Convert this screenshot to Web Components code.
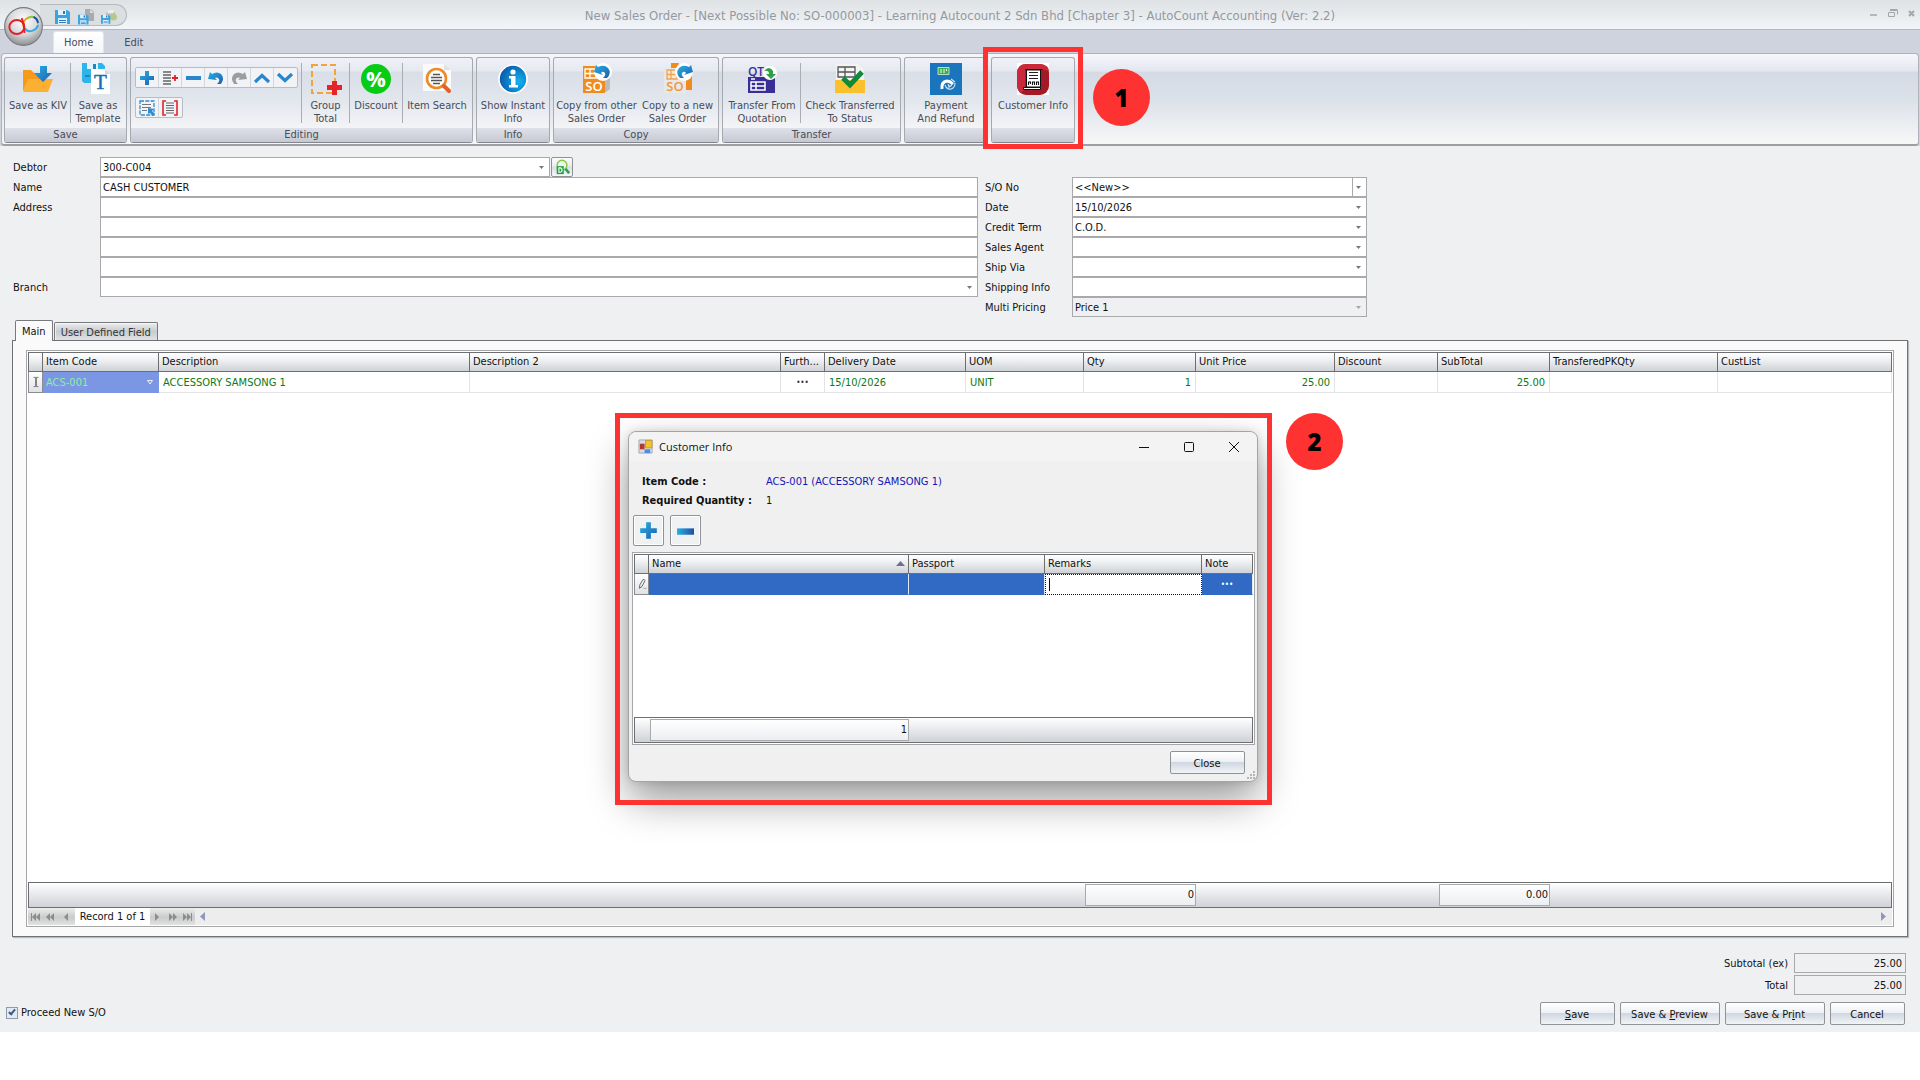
<!DOCTYPE html>
<html lang="en">
<head>
<meta charset="utf-8">
<title>New Sales Order - AutoCount Accounting</title>
<style>
  html, body { margin: 0; background: #fff; }
  body { font: 11px/13px "DejaVu Sans Condensed", "DejaVu Sans", sans-serif; color: #111; }
</style>
</head>
<body>
<sales-order-app></sales-order-app>

<script>
const BASE = `
  *, *::before, *::after { box-sizing: border-box; }
  :host { display: block; }
  button, input, select { font: inherit; color: inherit; margin: 0; border-radius: 0; outline: 0; }
  button { padding: 0; border: 0; background: none; cursor: default; }
  svg { display: block; }
`;

/* Icon artwork. Each entry: [viewBox, markup] */
const BLUE = '<defs><linearGradient id="b" x1="0" y1="0" x2="1" y2="1"><stop offset="0" stop-color="#27b0e6"/><stop offset="1" stop-color="#1f5fae"/></linearGradient></defs>';
const FLOPPY = '<path fill="#3ba3e0" d="M0 1h12l3 2v12H0z"/><path fill="#dff1fb" d="M3 1h8v5H3zM3 9h9v6H3z"/><path fill="#2b7cc4" d="M8 2h2v3H8zM4 11h7v1H4zM4 13h7v1H4z"/>';
const ICONS = {
  orb: ['0 0 38 38', `<defs><radialGradient id="g" cx=".5" cy=".35" r=".65"><stop offset="0" stop-color="#fff"/><stop offset=".55" stop-color="#d9dadc"/><stop offset="1" stop-color="#8e9093"/></radialGradient></defs>
    <circle cx="19" cy="19" r="18.4" fill="url(#g)" stroke="#77797c"/>
    <g fill="none" stroke-width="1.900" stroke-linecap="round">
    <path d="M19.500 20a7 7 0 0 1 4-9.500" stroke="#f6a21b"/><path d="M23.500 10.500q3-1.500 6-.500" stroke="#8cc63f"/><path d="M29.500 10q3 1.500 3.500 5" stroke="#1c4fa0"/><path d="M20.500 21q3 4 7.500 2 4-1.500 5-5" stroke="#35a8e0"/>
    <ellipse cx="12.500" cy="19.500" rx="7.300" ry="6.800" stroke="#e0202c"/><path d="M17.500 11.500q2 5 2.500 13" stroke="#e0202c"/></g>`],
  floppy: ['0 0 16 16', FLOPPY],
  floppyDoc: ['0 0 16 16', '<path fill="#a9abad" d="M7 0h6l3 3v9H7z"/><path fill="#d8dadb" d="M12 0v4h4z"/><g transform="translate(0 5) scale(.7)">' + FLOPPY + '</g>'],
  floppyPrint: ['0 0 18 16', '<path fill="#b9bbbd" d="M6 3h10v7H6z"/><path fill="#eceded" d="M8 0h6v4H8z"/><circle cx="14" cy="8" r="4" fill="#b5c98a"/><g transform="translate(0 5) scale(.7)">' + FLOPPY + '</g>'],
  kiv: ['0 0 32 32', BLUE + '<path fill="#f59a1b" d="M1 7h8l3 3h12v6H7L1 28z"/><path fill="#fbb034" d="M6 16h25l-5 13H1z"/><path fill="url(#b)" d="M18 3h7v7h5l-9 9-9-9h6z"/>'],
  template: ['0 0 32 32', '<path fill="#2fb4ea" d="M0 0h20l3 3v3H9v14H2l-2-2z"/><path fill="#dff3fc" d="M5 0h11v6H5z"/><path fill="#2583c4" d="M11 1h3v5h-3zM3 12h5v2H3z"/><path fill="#fff" d="M9 6h14l5 5v20H9z"/><path fill="#d5d7da" d="M23 6l5 5h-5z"/><text x="18.500" y="26" font-family="Liberation Serif" font-size="21" fill="#1c6fb5" stroke="#1c6fb5" stroke-width=".5" text-anchor="middle">T</text>'],
  plus: ['0 0 16 16', BLUE + '<path fill="url(#b)" d="M6 1h4v5h5v4h-5v5H6v-5H1V6h5z"/>'],
  listPlus: ['0 0 16 16', '<path stroke="#666" stroke-width="1.300" d="M1 2h8M1 5h8M1 8h8M1 11h8M1 14h8"/><path stroke="#e3242b" stroke-width="1.800" d="M10 8h6M13 5v6"/>'],
  minus: ['0 0 16 16', BLUE + '<rect x="1" y="6" width="15" height="4" fill="#2a86cc"/>'],
  undo: ['0 0 16 16', BLUE + '<path fill="url(#b)" d="M0 9 2 2l2 2q5-3 9 0 4 4 0 10h-4q4-4 1-6-2-1-3 0l2 2z"/>'],
  redo: ['0 0 16 16', '<path fill="#9b9da0" d="M16 9 14 2l-2 2Q7 1 3 4q-4 4 0 10h4Q3 10 6 8q2-1 3 0l-2 2z"/>'],
  up: ['0 0 16 16', '<path fill="none" stroke="#2a86cc" stroke-width="3.200" d="M1 12l7-6.500 7 6.500"/>'],
  down: ['0 0 16 16', '<path fill="none" stroke="#2a86cc" stroke-width="3.200" d="M1 4l7 6.500L15 4"/>'],
  selectAll: ['0 0 16 16', '<rect x="1" y="1" width="14" height="14" fill="none" stroke="#2f8bd0" stroke-width="1.300" stroke-dasharray="4 1.300"/><path stroke="#777" stroke-width="1.100" d="M3 4.500h9M3 7.500h9M3 10.500h5"/><path fill="#2f8bd0" d="M9 8l6 1-2 2 3 3-2 2-3-3-2 1z"/>'],
  brackets: ['0 0 16 16', '<path fill="none" stroke="#e3242b" stroke-width="1.600" d="M4 1H1v14h3M12 1h3v14h-3"/><path stroke="#666" stroke-width="1.100" d="M4 3h8M4 5.500h8M4 8h8M4 10.500h8M4 13h8"/>'],
  group: ['0 0 32 32', '<rect x="2" y="2" width="23" height="28" fill="none" stroke="#f2a33a" stroke-width="2" stroke-dasharray="6 3"/><path fill="#e3242b" d="M22 18h5v4h5v5h-5v5h-5v-5h-5v-5h5z"/>'],
  discount: ['0 0 32 32', '<circle cx="16" cy="16" r="15" fill="#06cc14"/><text x="16" y="24" font-family="Open Sans" font-weight="700" font-size="22" fill="#fff" text-anchor="middle">%</text>'],
  search: ['0 0 32 32', '<path fill="#fbfbfc" d="M2 1h21l7 6v21H2z"/><path fill="#dfe1e5" d="M23 1l7 6h-7z"/><circle cx="15.500" cy="15.500" r="9.500" fill="#fff" stroke="#ef8a2b" stroke-width="2.600"/><path stroke="#e2602a" stroke-width="4" stroke-linecap="round" d="M23 23l5 5"/><path stroke="#555" stroke-width="1.600" d="M12 11.500h7M10 14.500h11M10 17.500h11M12 20.500h7"/>'],
  info: ['0 0 32 32', '<defs><radialGradient id="i" cx=".7" cy=".6" r=".7"><stop offset="0" stop-color="#12b2f2"/><stop offset="1" stop-color="#0a5aa8"/></radialGradient></defs><circle cx="16" cy="16" r="14" fill="url(#i)" stroke="#fff" stroke-width="1.600"/><circle cx="16" cy="9" r="2.600" fill="#fff"/><path fill="#fff" d="M12 13h6.500v9H21v2.500h-9V22h2v-6.500h-2z"/>'],
  copyFrom: ['0 0 32 32', BLUE + '<path fill="#b9bbbe" d="M8 8h21v18l-4 3H8z"/><path fill="#f08c1e" d="M2 3h22v27H2z"/><path stroke="#fff" fill="none" stroke-width="1.300" d="M4 6h11v9H4zM4 10.500h11M9 6v9"/><text x="13" y="28" font-family="Open Sans" font-weight="600" font-size="13" fill="#fff" text-anchor="middle">SO</text><circle cx="22" cy="9" r="9" fill="#fff"/><path fill="url(#b)" d="M13 9l2-7 2 2q6-3 10 1 4 5-1 10h-4q4-4 1-6-2-1-3 1l2 2z"/>'],
  copyTo: ['0 0 32 32', BLUE + '<path fill="#f08c1e" d="M9 0h8l-2 6h15v21H9z"/><path fill="#e7e8ea" d="M2 5h22v25H2z"/><path stroke="#eda457" fill="#fbe9d4" stroke-width="1.300" d="M5 7h10v9H5zM5 11.500h10M9 7v9"/><text x="13" y="28" font-family="Open Sans" font-weight="600" font-size="13" fill="#f0973a" text-anchor="middle">SO</text><circle cx="22" cy="9" r="9" fill="#fff"/><path fill="url(#b)" d="M31 9l-2-7-2 2q-6-3-10 1-4 5 1 10h4q-4-4-1-6 2-1 3 1l-2 2z"/>'],
  transfer: ['0 0 32 32', '<text x="10" y="13" font-family="Open Sans" font-weight="600" font-size="12" fill="#3b2d96" text-anchor="middle">QT</text><path fill="#3b2d96" d="M2 14h27v16H2z"/><path fill="none" stroke="#fff" stroke-width="1.500" d="M5 19h14v8H5zM5 23h14M10 19v8M5 16h4"/><circle cx="24" cy="10" r="7" fill="#fff"/><path fill="#2fa044" d="M18 8q5-6 9 0v3h3l-5 5-5-5h3q0-4-5-3z"/>'],
  check: ['0 0 32 32', '<path fill="#f3f3f3" d="M2 1h22l6 6v11H2z"/><path fill="#fbc12d" d="M1 17h30v13H1z"/><path fill="none" stroke="#555" stroke-width="1.300" d="M4 4h17v10H4zM4 9h17M11 4v10"/><path fill="none" stroke="#0f8a3c" stroke-width="5" d="M9 15l7 7L28 9"/>'],
  payment: ['0 0 32 32', '<path fill="#1b75bc" d="M0 0h32v32H0z"/><path fill="#35b24a" stroke="#d9f2dd" stroke-width=".8" d="M8 4.500h11v7H8z"/><path stroke="#fff" stroke-width="1" d="M11 6v4M14 6v4M16.500 6v2"/><path fill="none" stroke="#fff" stroke-width="3" d="M12 26q-1-7 5-8 3 0 6 3"/><path fill="none" stroke="#cfe6f7" stroke-width="1.100" d="M15 22q2 5 6 4 4-1 4-6M18 21q1 3 3 2M21 16l4 3M18 24q3 0 4-3"/>'],
  customer: ['0 0 32 32', '<path fill="#fff" d="M0 0h32v32H0z"/><rect width="32" height="31" y="1" rx="9" fill="#a31a26"/><path fill="#c9293a" d="M9 1h14q9 1 9 7L24 6H8v20L4 30Q0 27 0 22V9q1-8 9-8z"/><path fill="#fff" stroke="#111" d="M8.500 6.500h17M9.500 7h14v17h-14z"/><path fill="#fff" stroke="#111" d="M6.500 24.500h17v2h-17z"/><path stroke="#222" d="M12 9.500h9M12 12.500h9M12 15.500h9"/><path stroke="#111" stroke-width="1.100" fill="none" d="M11.500 22v-3h2v2m2 1v-3h2v3m2 0v-3h2v3"/>'],
  debtor: ['0 0 18 18', '<circle cx="9" cy="7" r="5.500" fill="#e8f6ec" stroke="#8cc63f" stroke-width="1.600"/><path stroke="#2f9e4f" stroke-width="3" d="M13 11l4 5"/><path fill="#1fa347" d="M3 8h8v9H3z"/><path fill="none" stroke="#fff" stroke-width="1.200" d="M5 10h2q2 0 2 2.500T7 15H5.500v-5"/>'],
  form: ['0 0 16 16', '<path fill="#d9dde5" stroke="#8d97ab" stroke-width=".8" d="M1 1h14v14H1z"/><path fill="#b03a2e" d="M2 5h5v6H2z"/><path fill="#f3c22d" stroke="#b98b12" stroke-width=".7" d="M8 1.500h7v8H8z"/><path fill="#4b8fe0" d="M7 11h6v4H7z"/>'],
  bigMinus: ['0 0 16 16', '<defs><linearGradient id="m"><stop offset="0" stop-color="#27b0e6"/><stop offset="1" stop-color="#1f4f9e"/></linearGradient></defs><rect x="0" y="6" width="16" height="6" fill="url(#m)"/>'],
  pencil: ['0 0 10 14', '<path fill="none" stroke="#555" d="M2 12l.500-4L6 2q2-1 2.500 1L5 10z"/><path stroke="#555" d="M7 12h1M9 12h1"/>'],
  ibeam: ['0 0 8 12', '<path fill="none" stroke="#666" d="M1 .500h2.500V11.500H1M7 .500H4.500V11.500H7"/>'],
};

class AcElement extends HTMLElement {
  constructor() { super(); this.attachShadow({ mode: 'open' }); }
  connectedCallback() { this.shadowRoot.innerHTML = `<style>${BASE}${this.css()}</style>${this.html()}`; }
  css() { return ''; }
  html() { return '<slot></slot>'; }
  attr(n, d = '') { return this.getAttribute(n) ?? d; }
}

class AcIcon extends AcElement {
  css() { return `:host { width: ${this.attr('size', 32)}px; height: ${this.attr('size', 32)}px; flex: none; } svg { width: 100%; height: 100%; overflow: visible; }`; }
  html() { const [v, m] = ICONS[this.attr('name')]; return `<svg viewBox="${v}" aria-hidden="true">${m}</svg>`; }
}
customElements.define('ac-icon', AcIcon);

class AcTitleBar extends AcElement {
  css() { return `
    :host { position: relative; display: grid; grid-template-columns: 1fr auto 1fr; align-items: start; height: 29px; background: linear-gradient(#dfe2e4, #e8ebed 50%, #f2f5fa); }
    .quick { display: flex; gap: 7px; width: 87px; height: 22px; margin: 4px 0 0 40px; padding: 3px 0 0 15px; border: 1px solid #b6b9bd; border-left: 0; border-radius: 0 11px 11px 0; background: #dcdfe2; }
    h1 { margin: 8px 0 0; font-size: 13px; line-height: 16px; font-weight: 400; color: #94989f; }
    .win { display: flex; justify-content: flex-end; gap: 9px; padding: 9px 3px 0 0; }
    .orb { position: absolute; left: 4px; top: 7px; }
  `; }
  html() { return `
    <div class="quick">
      <button aria-label="Save"><ac-icon name="floppy" size="16"></ac-icon></button>
      <button aria-label="Save and new"><ac-icon name="floppyDoc" size="16"></ac-icon></button>
      <button aria-label="Save and print"><ac-icon name="floppyPrint" size="16"></ac-icon></button>
    </div>
    <h1><slot></slot></h1>
    <div class="win">
      <button aria-label="Minimize"><svg width="10" height="10"><path stroke="#a3a6aa" stroke-width="1.500" d="M1 6h7"/></svg></button>
      <button aria-label="Restore"><svg width="10" height="10"><path fill="none" stroke="#a3a6aa" d="M.500 3.500h6v4h-6zM2 1.500h7.500v4M2 0.500h7.500"/></svg></button>
      <button aria-label="Close"><svg width="10" height="10"><path stroke="#a3a6aa" stroke-width="2" d="M2 2l5 5M7 2l-5 5"/></svg></button>
    </div>
    <button class="orb" aria-label="Application menu"><ac-icon name="orb" size="39"></ac-icon></button>
  `; }
}
customElements.define('ac-title-bar', AcTitleBar);

class AcRibbon extends AcElement {
  css() { return `
    :host { background: #ced3dd; border-top: 1px solid #b2b7c0; color: #474c58; }
    nav { display: flex; gap: 8px; padding: 1px 0 0 53px; }
    nav button { height: 22px; padding: 0 12px; border-radius: 3px 3px 0 0; }
    nav button:first-child { padding: 0 10px; background: linear-gradient(#fff, #f3f5fa); border: 1px solid #d6eceb; border-bottom: 0; }
    .panel { display: flex; gap: 3px; height: 93px; margin: 0 1px; padding: 3px 2px 0; border: 1px solid #aeb2ba; border-bottom: 2px solid #9c9fa4; border-radius: 4px;
      background: linear-gradient(#f6f7fb, #e4e7f0 17px, #d5dbe5 18px, #dbe1e9 45px, #f6f6f7 88px); }
  `; }
  html() { return `<nav><button>Home</button><button>Edit</button></nav><div class="panel"><slot></slot></div>`; }
}
customElements.define('ac-ribbon', AcRibbon);

class AcRibbonGroup extends AcElement {
  css() { return `
    :host { display: flex; flex-direction: column; flex: none; height: 86px; border: 1px solid #a6a9b0; border-bottom-color: #83868c; border-radius: 3px; overflow: hidden;
      background: linear-gradient(#eff1f6, #e6e9f0 13px, #d9dee7 14px, #e2e6ed 42px, #f4f4f7 70px); }
    .row { display: flex; flex: 1; padding: 5px 1px 0; }
    .cap { height: 14px; text-align: center; background: linear-gradient(#dfe1ea, #c6c9d1); }
  `; }
  html() { return `<div class="row"><slot></slot></div><div class="cap">${this.attr('caption')}</div>`; }
}
customElements.define('ac-ribbon-group', AcRibbonGroup);

class AcRibbonButton extends AcElement {
  css() { return `
    :host { flex: none; width: ${this.attr('width')}px; }
    :host([split]) { border-right: 1px solid #a9adb5; height: 60px; }
    button { display: flex; flex-direction: column; align-items: center; width: 100%; gap: 4px; white-space: nowrap; }
  `; }
  html() { return `<button><ac-icon name="${this.attr('icon')}"></ac-icon><span><slot></slot></span></button>`; }
}
customElements.define('ac-ribbon-button', AcRibbonButton);

class AcToolCluster extends AcElement {
  css() { return `
    :host { width: 170px; padding: 4px 0 0 3px; border-right: 1px solid #a9adb5; height: 60px; }
    div { display: flex; width: max-content; height: 21px; margin-bottom: 9px; border: 1px solid #b9bcc3; border-radius: 2px; background: #f1f3f7; }
    button { width: 23px; padding: 1px 3px; border-right: 1px solid #d3d6dc; }
    button:last-child { border: 0; }
  `; }
  html() {
    const b = (i, l) => `<button aria-label="${l}"><ac-icon name="${i}" size="16"></ac-icon></button>`;
    return `<div>${b('plus', 'Add row')}${b('listPlus', 'Insert row')}${b('minus', 'Delete row')}${b('undo', 'Undo')}${b('redo', 'Redo')}${b('up', 'Move up')}${b('down', 'Move down')}</div>
      <div>${b('selectAll', 'Select all')}${b('brackets', 'Range')}</div>`;
  }
}
customElements.define('ac-tool-cluster', AcToolCluster);

/* One labelled form row; kind = text | combo */
class AcField extends AcElement {
  css() { return `
    :host { display: grid; grid-template-columns: var(--label, 87px) minmax(0, 1fr) auto; align-items: center; height: 20px; }
    label { white-space: nowrap; }
    .box { position: relative; height: 20px; border: 1px solid #a9a9ac; background: #fff; }
    :host([disabled]) .box { background: #eff0f2; }
    input, select { display: block; width: 100%; height: 18px; padding: 0 2px; border: 0; background: none; appearance: none; }
    input:disabled, select:disabled { color: #111; opacity: 1; }
    .arrow { position: absolute; right: 0; top: 0; width: 14px; height: 18px; padding: 8px 0 0 4px; pointer-events: none; }
    :host([boxed]) .arrow { border-left: 1px solid #a9a9ac; padding-left: 3px; }
    :host([align=right]) input { text-align: right; padding: 0 3px; }
    :host([align=right]) label { text-align: right; padding-right: 6px; }
  `; }
  html() {
    const v = this.attr('value').replace(/</g, '&lt;'), l = this.attr('label'), dis = this.hasAttribute('disabled') ? 'disabled' : '';
    const name = l ? '' : `aria-label="${this.attr('name')}"`;
    const ctl = this.attr('kind') === 'combo'
      ? `<select id="c" ${name} ${dis}><option>${v}</option></select><span class="arrow"><svg width="5" height="3"><path fill="${dis ? '#a5a6a8' : '#77787a'}" d="M0 0h5L2.500 3z"/></svg></span>`
      : `<input id="c" type="text" ${name} ${dis} value="${v}">`;
    return `${l ? `<label for="c">${l}</label>` : '<span></span>'}<div class="box">${ctl}</div><slot></slot>`;
  }
}
customElements.define('ac-field', AcField);

class AcButton extends AcElement {
  css() { return `
    :host { width: ${this.attr('width', 75)}px; }
    button { width: 100%; height: 23px; padding: 1px 1px 0 0; border: 1px solid #8f9296; border-radius: 2px; background: linear-gradient(#fff, #eef1f5 45%, #cfd7e0 50%, #f1f4f7); }
  `; }
  html() { return `<button type="button"><slot></slot></button>`; }
}
customElements.define('ac-button', AcButton);

class AcIconButton extends AcElement {
  css() { const s = this.attr('size'); return `
    button { display: flex; align-items: center; justify-content: center; width: ${s}px; height: ${this.attr('height', s)}px; border: 1px solid #8f9296; border-radius: 2px; background: linear-gradient(#fbfbfc, #e9ecf0 45%, #d9dee4 50%, #f6f7f9); }
    :host([flat]) button { background: #f0f1f3; box-shadow: inset 0 0 0 1px #fff; }
  `; }
  html() { return `<button type="button" aria-label="${this.attr('label')}"><ac-icon name="${this.attr('icon')}" size="${this.attr('glyph')}"></ac-icon></button>`; }
}
customElements.define('ac-icon-button', AcIconButton);

const GRID_CSS = `
  :host { display: flex; flex-direction: column; border: 1px solid #a5a6a8; padding: 1px; background: #fff; }
  table { width: 100%; table-layout: fixed; border-collapse: separate; border-spacing: 0; }
  th, td { padding: 0 4px; text-align: left; font-weight: 400; white-space: nowrap; overflow: hidden; }
  th { height: 20px; padding: 0 3px 2px; border: 1px solid #6c6e71; border-left: 0; background: linear-gradient(#fff, #eef0f2 40%, #cfd2d6); }
  th:first-child { border-left: 1px solid #6c6e71; }
  .rows td { height: 21px; border-right: 1px solid #e3e3e5; border-bottom: 1px solid #e3e3e5; }
  .rows td:first-child { border: 1px solid #8a8c8f; border-top: 0; background: linear-gradient(#fff, #dfe2e6); padding: 0 1px; }
  .rows td:first-child ac-icon { margin: 0 auto; }
  .r { text-align: right; }
  .dots { text-align: center; padding: 0; font-size: 8px; }
  .space { flex: 1; }
  .sum { border: 1px solid #6c6e71; background: linear-gradient(#fff, #ebecef 40%, #cfd2d6); }
  .sum td { height: 24px; padding: 0; }
  .tot { height: 22px; margin-left: 1px; padding-right: 1px; border: 1px solid #a9a9ac; background: linear-gradient(#fff, #eceef1); text-align: right; line-height: 20px; }
`;

class AcOrderGrid extends AcElement {
  css() { return GRID_CSS + `
    :host { height: 577px; }
    .rows { color: #0b7a12; }
    .rows td.code { padding-left: 3px; background: #7b96e2; color: #8af0a0; border-color: #7b96e2; }
    .code div { display: flex; justify-content: space-between; align-items: center; }
    .rows .dots { color: #333; }
    .nav { display: flex; height: 17px; align-items: stretch; }
    .nav .grp { display: flex; justify-content: space-around; align-items: center; background: linear-gradient(#ededed, #c9cacb 55%, #e2e2e2); }
    .nav .grp svg { fill: #8b8c8e; }
    .nav .first { width: 47px; }
    .nav .last { width: 45px; }
    .nav span { width: 75px; text-align: center; line-height: 17px; }
    .bar { flex: 1; display: flex; justify-content: space-between; align-items: center; padding: 0 5px; background: #ededee; }
    .bar svg { fill: #8f97bb; }
  `; }
  html() {
    const cols = (first) => [first, 116, 311, 311, 44, 141, 118, 112, 139, 103, 112, 168, 0].map(w => w ? `<col style="width:${w}px">` : '<col>').join('');
    const heads = ['', 'Item Code', 'Description', 'Description 2', 'Furth...', 'Delivery Date', 'UOM', 'Qty', 'Unit Price', 'Discount', 'SubTotal', 'TransferedPKQty', 'CustList'];
    const nav = (l, d, w = 12) => `<button aria-label="${l}"><svg width="${w}" height="8"><path d="${d}"/></svg></button>`;
    return `
    <table><colgroup>${cols(15)}</colgroup>
      <thead><tr>${heads.map(h => `<th scope="col">${h}</th>`).join('')}</tr></thead>
      <tbody class="rows"><tr>
        <td><ac-icon name="ibeam" size="10"></ac-icon></td>
        <td class="code"><div>ACS-001<svg width="7" height="5"><path fill="none" stroke="#e9edfb" d="M.500 .500h5L3 4z"/></svg></div></td>
        <td>ACCESSORY SAMSONG 1</td><td></td><td class="dots">•••</td><td>15/10/2026</td><td>UNIT</td>
        <td class="r">1</td><td class="r">25.00</td><td></td><td class="r">25.00</td><td></td><td></td>
      </tr></tbody>
    </table>
    <div class="space"></div>
    <table class="sum"><colgroup>${cols(14)}</colgroup><tbody><tr>
      ${heads.map((h, i) => `<td>${i === 7 ? '<div class="tot">0</div>' : i === 10 ? '<div class="tot">0.00</div>' : ''}</td>`).join('')}
    </tr></tbody></table>
    <div class="nav">
      <div class="grp first">
        ${nav('First', 'M1 0h1v8H1zM6 0v8L2 4zM10 0v8L6 4z')}${nav('Previous page', 'M5 0v8L1 4zM9 0v8L5 4z')}${nav('Previous', 'M7 0v8L3 4z')}
      </div>
      <span>Record 1 of 1</span>
      <div class="grp last">
        ${nav('Next', 'M3 0v8l4-4z')}${nav('Next page', 'M2 0v8l4-4zM6 0v8l4-4z')}${nav('Last', 'M1 0v8l4-4zM5 0v8l4-4zM9 0h1v8H9z')}
      </div>
      <div class="bar"><svg width="6" height="9"><path d="M5 0v9L0 4.500z"/></svg><svg width="6" height="9"><path d="M0 0v9l5-4.500z"/></svg></div>
    </div>`;
  }
}
customElements.define('ac-order-grid', AcOrderGrid);

class AcTabs extends AcElement {
  css() { return `
    .tabs { display: flex; align-items: flex-end; gap: 1px; padding-left: 3px; height: 20px; }
    .tabs button { height: 18px; padding: 1px 6px 0; border: 1px solid #77797c; border-bottom: 0; border-radius: 2px 2px 0 0; background: linear-gradient(#ececed, #c8cbcf 50%, #dfe1e4); color: #333; box-shadow: inset 1px 1px #fff9; }
    .tabs button:first-child { position: relative; height: 21px; margin-bottom: -1px; background: #fafafa; color: #111; }
    .page { border: 1px solid #6f7173; background: #fafafa; padding: 9px 13px; box-shadow: 1px 1px 1px #bbb; }
  `; }
  html() { return `<div class="tabs"><button>Main</button><button>User Defined Field</button></div><div class="page"><slot></slot></div>`; }
}
customElements.define('ac-tabs', AcTabs);

class AcCustomerDialog extends AcElement {
  css() { return `
    :host { position: absolute; left: 628px; top: 431px; width: 630px; height: 351px; border: 1px solid #a3a4a5; border-radius: 8px; background: #f0f0f0; overflow: visible;
      box-shadow: 0 18px 40px rgba(0,0,0,.4), 0 0 8px rgba(0,0,0,.12); display: flex; flex-direction: column; }
    header { display: flex; align-items: center; height: 29px; padding: 0 15px 0 9px; border-radius: 8px 8px 0 0; background: #f3f3f3; }
    header h2 { margin: 0 auto 0 6px; font: 400 11px/16px "Open Sans", sans-serif; color: #111; }
    header .w { display: flex; gap: 29px; }
    header .w svg { width: 16px; height: 16px; fill: none; stroke: #111; }
    dl { display: grid; grid-template-columns: 124px 1fr; row-gap: 6px; margin: 0; padding: 14px 13px 0; }
    dt { font-weight: 700; } dd { margin: 0; }
    dd.code { color: #1515b8; }
    .tools { display: flex; gap: 6px; padding: 8px 4px 6px; }
    .foot { flex: 1; display: flex; justify-content: flex-end; padding: 6px 12px 0 0; }
    .grip { position: absolute; right: 1px; bottom: 1px; }
  `; }
  html() { return `
    <header><ac-icon name="form" size="15"></ac-icon><h2>Customer Info</h2>
      <div class="w"><button aria-label="Minimize"><svg><path d="M3 8.500h10"/></svg></button><button aria-label="Maximize"><svg><rect x="3.500" y="3.500" width="9" height="9" rx="1"/></svg></button><button aria-label="Close window"><svg><path d="M3 3l10 10M13 3L3 13"/></svg></button></div>
    </header>
    <dl><dt>Item Code :</dt><dd class="code">ACS-001 (ACCESSORY SAMSONG 1)</dd><dt>Required Quantity :</dt><dd>1</dd></dl>
    <div class="tools"><ac-icon-button flat icon="plus" label="Add" size="31" glyph="19"></ac-icon-button><ac-icon-button flat icon="bigMinus" label="Remove" size="31" glyph="17"></ac-icon-button></div>
    <ac-customer-grid></ac-customer-grid>
    <div class="foot"><ac-button>Close</ac-button></div>
    <svg class="grip" width="9" height="9" fill="#b5b6b8"><path d="M6 0h2v2H6zM3 3h2v2H3zM6 3h2v2H6zM0 6h2v2H0zM3 6h2v2H3zM6 6h2v2H6z"/></svg>
  `; }
}

class AcCustomerGrid extends AcElement {
  css() { return GRID_CSS + `
    :host { height: 193px; margin: 0 2px 0 3px; }
    th.sort span { display: flex; justify-content: space-between; align-items: center; }
    .rows td.sel { background: #316ac5; border-color: #316ac5; border-right-color: #dfe8f5; color: #fff; }
    .rows td.edit { padding: 0; border: 0; }
    .edit input { display: block; width: 100%; height: 21px; border: 1px dotted #111; padding: 0 3px; background: linear-gradient(#111, #111) 3px 3px / 1px 13px no-repeat #fff; }
  `; }
  html() {
    const cols = (first) => `<col style="width:${first}px"><col style="width:260px"><col style="width:136px"><col style="width:157px"><col>`;
    return `
    <table><colgroup>${cols(15)}</colgroup>
      <thead><tr><th></th><th class="sort" scope="col"><span>Name<svg width="9" height="5"><path fill="#6b7196" d="M0 5l4.500-5L9 5z"/></svg></span></th><th scope="col">Passport</th><th scope="col">Remarks</th><th scope="col">Note</th></tr></thead>
      <tbody class="rows"><tr><td><ac-icon name="pencil" size="12"></ac-icon></td><td class="sel"></td><td class="sel"></td><td class="edit"><input type="text" aria-label="Remarks"></td><td class="sel dots">•••</td></tr></tbody>
    </table>
    <div class="space"></div>
    <table class="sum"><colgroup>${cols(14)}</colgroup><tbody><tr><td></td><td><div class="tot">1</div></td><td></td><td></td><td></td></tr></tbody></table>`;
  }
}
customElements.define('ac-customer-grid', AcCustomerGrid);
customElements.define('ac-customer-dialog', AcCustomerDialog);

/* Red tutorial mark: a frame with a numbered disc beside it */
class AcCallout extends AcElement {
  css() { return `
    :host { position: absolute; border: 5px solid #ff3232; pointer-events: none; }
    b { position: absolute; left: calc(100% + var(--gap)); top: var(--drop); display: grid; place-items: center; width: 57px; height: 57px; border-radius: 50%; background: #ff3232; color: #000; font: 800 24px/28px "Open Sans", sans-serif; }
  `; }
  html() { return `<b><slot></slot></b>`; }
}
customElements.define('ac-callout', AcCallout);

class SalesOrderApp extends AcElement {
  css() { return `
    :host { position: relative; background: #eff0f2; overflow: hidden; padding-bottom: 7px; }
    .form { display: grid; grid-template-columns: minmax(0, 965px) 382px; column-gap: 7px; padding: 11px 13px 0; }
    .left { --label: 87px; } .right { --label: 87px; padding-top: 20px; }
    .debtor { display: grid; grid-template-columns: minmax(0, 560px); }
    ac-tabs { margin: 3px 12px 0; }
    .bottom { display: flex; justify-content: space-between; align-items: flex-end; padding: 16px 14px 0 6px; }
    .totals { display: grid; justify-content: end; gap: 2px; }
    .totals ac-field { width: 212px; --label: 100px; }
    .actions { display: flex; justify-content: flex-end; gap: 5px; margin-top: 7px; padding-right: 1px; }
    .chk { display: flex; align-items: center; gap: 3px; padding-bottom: 6px; }
    .chk input { appearance: none; width: 12px; height: 12px; border: 1px solid #8f9aab; background: #e3eaf2; display: grid; place-items: center; }
    .chk input:checked::before { content: ""; width: 4px; height: 7px; margin-top: -2px; border: solid #3d5a86; border-width: 0 2px 2px 0; rotate: 40deg; }
  `; }
  html() {
    const f = (label, value = '', extra = '') => `<ac-field label="${label}" value="${value}" ${extra}></ac-field>`;
    return `
    <ac-title-bar>New Sales Order - [Next Possible No: SO-000003] - Learning Autocount 2 Sdn Bhd [Chapter 3] - AutoCount Accounting (Ver: 2.2)</ac-title-bar>
    <ac-ribbon>
      <ac-ribbon-group caption="Save"><ac-ribbon-button icon="kiv" width="65" split>Save as KIV</ac-ribbon-button><ac-ribbon-button icon="template" width="54">Save as<br>Template</ac-ribbon-button></ac-ribbon-group>
      <ac-ribbon-group caption="Editing"><ac-tool-cluster></ac-tool-cluster><ac-ribbon-button icon="group" width="48" split>Group<br>Total</ac-ribbon-button><ac-ribbon-button icon="discount" width="53" split>Discount</ac-ribbon-button><ac-ribbon-button icon="search" width="68">Item Search</ac-ribbon-button></ac-ribbon-group>
      <ac-ribbon-group caption="Info"><ac-ribbon-button icon="info" width="70">Show Instant<br>Info</ac-ribbon-button></ac-ribbon-group>
      <ac-ribbon-group caption="Copy"><ac-ribbon-button icon="copyFrom" width="83">Copy from other<br>Sales Order</ac-ribbon-button><ac-ribbon-button icon="copyTo" width="79">Copy to a new<br>Sales Order</ac-ribbon-button></ac-ribbon-group>
      <ac-ribbon-group caption="Transfer"><ac-ribbon-button icon="transfer" width="77" split>Transfer From<br>Quotation</ac-ribbon-button><ac-ribbon-button icon="check" width="98">Check Transferred<br>To Status</ac-ribbon-button></ac-ribbon-group>
      <ac-ribbon-group caption=""><ac-ribbon-button icon="payment" width="80">Payment<br>And Refund</ac-ribbon-button></ac-ribbon-group>
      <ac-ribbon-group caption=""><ac-ribbon-button icon="customer" width="80">Customer Info</ac-ribbon-button></ac-ribbon-group>
    </ac-ribbon>
    <div class="form">
      <div class="left">
        <div class="debtor"><ac-field label="Debtor" value="300-C004" kind="combo"><ac-icon-button icon="debtor" label="Find debtor" size="22" height="20" glyph="16" style="margin-left:1px"></ac-icon-button></ac-field></div>
        ${f('Name', 'CASH CUSTOMER')}${f('Address')}
        ${f('', '', 'name="Address line 2"')}${f('', '', 'name="Address line 3"')}${f('', '', 'name="Address line 4"')}
        ${f('Branch', '', 'kind="combo"')}
      </div>
      <div class="right">
        ${f('S/O No', '&lt;&lt;New&gt;&gt;', 'kind="combo" boxed')}${f('Date', '15/10/2026', 'kind="combo"')}${f('Credit Term', 'C.O.D.', 'kind="combo"')}
        ${f('Sales Agent', '', 'kind="combo"')}${f('Ship Via', '', 'kind="combo"')}${f('Shipping Info')}${f('Multi Pricing', 'Price 1', 'kind="combo" disabled')}
      </div>
    </div>
    <ac-tabs><ac-order-grid></ac-order-grid></ac-tabs>
    <div class="bottom">
      <label class="chk"><input type="checkbox" checked>Proceed New S/O</label>
      <div>
        <div class="totals">${f('Subtotal (ex)', '25.00', 'align="right" disabled')}${f('Total', '25.00', 'align="right" disabled')}</div>
        <div class="actions"><ac-button><u>S</u>ave</ac-button><ac-button width="100">Save &amp; <u>P</u>review</ac-button><ac-button width="100">Save &amp; Pr<u>i</u>nt</ac-button><ac-button>Cancel</ac-button></div>
      </div>
    </div>
    <ac-customer-dialog></ac-customer-dialog>
    <ac-callout style="left:983px;top:47px;width:100px;height:102px;--gap:15px;--drop:17px">1</ac-callout>
    <ac-callout style="left:615px;top:413px;width:657px;height:392px;--gap:19px;--drop:-5px">2</ac-callout>`;
  }
}
customElements.define('sales-order-app', SalesOrderApp);
</script>
</body>
</html>
